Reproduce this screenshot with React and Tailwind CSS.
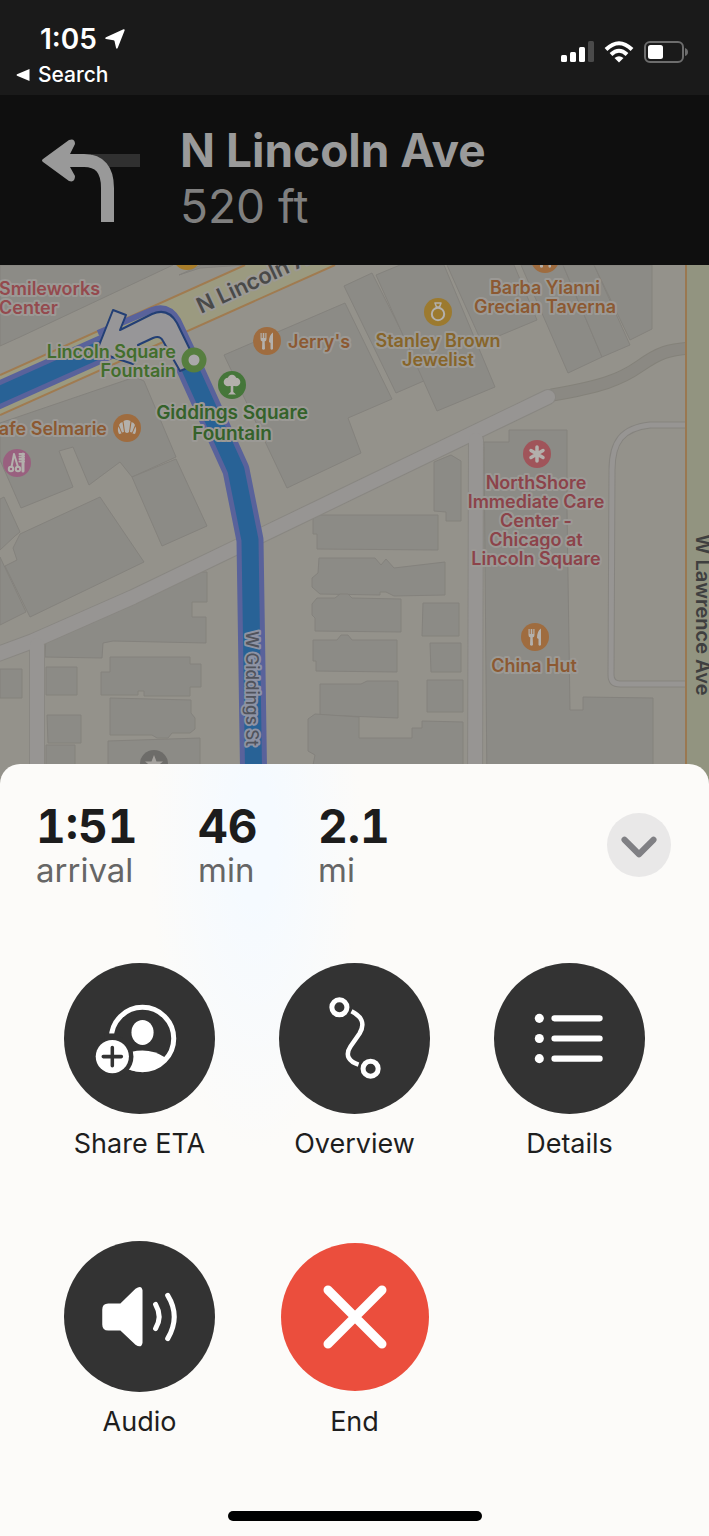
import { ChevronDown } from 'lucide-react';

const buildings = [
  'M0 265H173L20 337L0 346Z',
  'M179 275L201 265H245L200 268Z',
  'M224 355L345 303L392 399L348 418L361 453L287 488Z',
  'M344 286L372 273L426 380L396 393Z',
  'M376 275L400 265H444L495 387L437 411Z',
  'M447 265H514L537 320L482 343Z',
  'M521 265H563L602 357L568 373Z',
  'M563 265H594L630 345L602 357Z',
  'M594 265H652V329L630 340Z',
  'M0 423L135 377L144 381L176 457L132 477L120 462L89 485L73 447L59 451L73 487L21 508L0 460Z',
  'M132 477L176 459L207 526L162 546Z',
  'M0 499L4 497L20 532L15 536L0 550Z',
  'M20 534L100 497L144 562L30 617L5 566L17 560L13 548Z',
  'M0 557L26 612L0 625Z',
  'M46 638L192 572H207V602H192V617H206V643L113 641L103 643L102 658L45 657Z',
  'M46 667H77V695H46Z',
  'M47 715H81V743H48Z',
  'M46 745H75V790H46Z',
  'M0 669H22V698H0Z',
  'M101 672H110V657H190V664H201V687H190V696H144V691H138V695H101Z',
  'M110 698L191 700V713L195 718V729L190 733H172L168 738H157L152 735H110Z',
  'M108 741L200 738V790H108Z',
  'M313 515H438V550L317 549V534H313Z',
  'M319 558H375L381 565L386 559L394 568L445 562V595L394 596L386 592H380V595L320 594L312 587V578L318 573Z',
  'M317 598H335L340 594H348L352 598L401 599V632L315 631V618L312 615V604Z',
  'M313 640H337L341 635H348L352 640H397V672L316 671V661H313Z',
  'M320 684H361L367 681H398V718L320 715Z',
  'M308 719L315 714L359 717V738H412V728H422V721L463 722V790H308L315 755L308 751Z',
  'M434 462L451 455L461 461V521H446L446 512L434 511Z',
  'M423 603H459V636H422Z',
  'M430 643H461V672H431Z',
  'M427 680H463V712H427Z',
  'M484 442H509V430H567V511L570 710H583V697L653 698V790H487Z',
];

const pins = [
  { id: 'jerrys', x: 267, y: 341, fill: '#9f6c3f', kind: 'food' },
  { id: 'china', x: 535, y: 637, fill: '#9f6c3f', kind: 'food' },
  { id: 'barba', x: 545, y: 259, fill: '#9f6c3f', kind: 'food' },
  { id: 'lincoln-top', x: 187, y: 256, fill: '#a97e2b', kind: 'none' },
  { id: 'jeweler', x: 438, y: 312, fill: '#9c7a2f', kind: 'ring' },
  { id: 'giddings', x: 232, y: 385, fill: '#45763a', kind: 'tree' },
  { id: 'selmarie', x: 127, y: 428, fill: '#9f6c3f', kind: 'bakery' },
  { id: 'salon', x: 17, y: 463, fill: '#99607f', kind: 'salon' },
  { id: 'care', x: 537, y: 454, fill: '#a0545a', kind: 'care' },
  { id: 'star', x: 154, y: 764, fill: '#6d6c69', kind: 'star' },
];

const labels = [
  { lines: ['Smileworks', 'Center'], x: -1, y: 295, anchor: 'start', fill: '#944a4e' },
  { lines: ['Lincoln Square', 'Fountain'], x: 176, y: 358, anchor: 'end', fill: '#426e2c' },
  { lines: ['Giddings Square', 'Fountain'], x: 232, y: 419, anchor: 'middle', fill: '#34622a', size: 19, leading: 21 },
  { lines: ["Jerry's"], x: 288, y: 348, anchor: 'start', fill: '#8c5932' },
  { lines: ['Stanley Brown', 'Jewelist'], x: 438, y: 347, anchor: 'middle', fill: '#87652a' },
  { lines: ['Barba Yianni', 'Grecian Taverna'], x: 545, y: 294, anchor: 'middle', fill: '#8c5932' },
  { lines: ['Cafe Selmarie'], x: 107, y: 435, anchor: 'end', fill: '#8c5932' },
  { lines: ['NorthShore', 'Immediate Care', 'Center -', 'Chicago at', 'Lincoln Square'], x: 536, y: 489, anchor: 'middle', fill: '#8c434a' },
  { lines: ['China Hut'], x: 534, y: 672, anchor: 'middle', fill: '#8c5932' },
];

function PinGlyph({ kind }) {
  const line = { fill: 'none', stroke: '#b3b0ac', strokeWidth: 2, strokeLinecap: 'round', strokeLinejoin: 'round' };
  switch (kind) {
    case 'food':
      return (
        <g fill="#b3b0ac">
          <path d="M-6.500-8H-5.300V-3H-4.300V-8H-2.700V-3H-1.700V-8H-.5V-2Q-.5 0-2.300 .5L-2 8Q-3.500 9.500-5 8L-4.700 .5Q-6.500 0-6.500-2Z" />
          <path d="M6-8.500V8Q4.700 9.500 3.500 8V2L2 1Q2-6 6-8.500Z" />
        </g>
      );
    case 'ring':
      return (
        <g {...line}>
          <circle cy="2" r="6.200" />
          <path d="M-3-9H3L1.500-5H-1.500Z" strokeWidth="1.500" />
        </g>
      );
    case 'tree':
      return (
        <g fill="#b3b0ac">
          <circle cx="-4" cy="-3" r="4.300" />
          <circle cx="4" cy="-3" r="4.300" />
          <circle cy="-6" r="4.300" />
          <path d="M-4-3H4V1H-4ZM-1.300 0H1.300V7L4 9.500H-4L-1.300 7Z" />
        </g>
      );
    case 'bakery':
      return (
        <g fill="#b3b0ac">
          <path d="M-3.500-7Q0-9 3.500-7L2 4Q0 6-2 4Z" />
          <path d="M-4.500-6L-3 4L-5 4.500L-8-3Q-7-5.500-4.500-6ZM4.500-6L3 4L5 4.500L8-3Q7-5.500 4.500-6Z" />
          <path d="M-8.500-1.500L-5.500 5.500L-8 6Q-10 2-8.500-1.500ZM8.500-1.500L5.500 5.500L8 6Q10 2 8.500-1.500Z" />
        </g>
      );
    case 'salon':
      return (
        <g {...line}>
          <path d="M-3-9L-5.500 4M-3-9L1 4M2.500-9H7M2.500-6.500H7M2.500-4H7M2.500-1.500H7" />
          <path d="M6-9V8" strokeWidth="3" />
          <circle cx="-6" cy="6" r="2.200" />
          <circle cx="1" cy="6" r="2.200" />
        </g>
      );
    case 'care':
      return <path {...line} strokeWidth="3.500" d="M0-7V7M-6-3.500L6 3.500M-6 3.500L6-3.500" />;
    case 'star':
      return <path fill="#a5a29e" d="M0-9L2.500-2.500H9L4 1.500L6 8L0 4L-6 8L-4 1.500L-9-2.500H-2.500Z" />;
    default:
      return null;
  }
}

function RouteMap() {
  return (
    <svg
      viewBox="0 265 709 520"
      role="img"
      aria-label="Map of the route"
      className="block h-auto w-full bg-[#94928b] font-[Inter,'Liberation_Sans',sans-serif]"
    >
      <g fill="#8c8b86" stroke="#84827d" strokeWidth="1">
        {buildings.map((d) => (
          <path key={d} d={d} />
        ))}
      </g>

      {/* Side streets */}
      <g fill="none" strokeLinecap="round" strokeLinejoin="round">
        <path d="M552 395C600 387 620 380 640 366S668 350 690 348" stroke="#84827a" strokeWidth="13" />
        <path d="M552 395C600 387 620 380 640 366S668 350 690 348" stroke="#8b8983" strokeWidth="11" />
        <g stroke="#898782" strokeWidth="16">
          <path d="M-10 657L33 641L133 597L320 507L355 490L548 397" />
          <path d="M37 645V800M476 440L475 800" />
        </g>
        <g stroke="#979593" strokeWidth="14">
          <path d="M-10 657L33 641L133 597L320 507L355 490L548 397" />
          <path d="M37 645V800M476 440L475 800" />
        </g>
        <path d="M690 425H650C622 428 612 442 612 470L611 675Q611 684 620 684H690" stroke="#86847f" strokeWidth="7" />
        <path d="M690 425H650C622 428 612 442 612 470L611 675Q611 684 620 684H690" stroke="#979593" strokeWidth="5" />
      </g>

      {/* Main roads */}
      <path d="M0 375L245 265H335L0 415Z" fill="#9b9a80" />
      <path d="M0 375L245 265M335 265L0 415" stroke="#a07b50" strokeWidth="2" />
      <path d="M687 265H709V800H687Z" fill="#929480" />
      <path d="M686 265V800" stroke="#9a7851" strokeWidth="2" />

      {/* Route */}
      <g fill="none" strokeLinejoin="round">
        <path d="M98 333L152 310Q168 304 178 320L198 362" stroke="#59629b" strokeWidth="6" />
        <g stroke="#59629b" strokeWidth="27">
          <path d="M-10 399L113 344" />
          <path d="M188 364L236 470L250 540L254 800" />
        </g>
        <g stroke="#286296" strokeWidth="17">
          <path d="M-10 399L113 344" />
          <path d="M188 364L236 470L250 540L254 800" />
        </g>
      </g>
      <path
        d="M113 310L126 315L120 330L152 314Q168 307 177 323L197 364L180 371L163 341Q160 335 153 338L138 345L141 352L133 364L112 357L98 348Z"
        fill="#979698"
        stroke="#233f75"
        strokeWidth="2"
        strokeLinejoin="round"
      />
      <circle cx="194" cy="360" r="9" fill="#aaa8aa" stroke="#567e3f" strokeWidth="7" />

      {/* Places */}
      {pins.map((pin) => (
        <g key={pin.id} transform={`translate(${pin.x} ${pin.y})`}>
          <circle r="14" fill={pin.fill} />
          <PinGlyph kind={pin.kind} />
        </g>
      ))}
      <g stroke="#9b9995" strokeWidth="4" strokeLinejoin="round" paintOrder="stroke" fontWeight="600">
        {labels.map(({ lines, x, y, anchor, fill, size = 18, leading = 19 }) => (
          <text key={lines[0]} textAnchor={anchor} fill={fill} fontSize={size}>
            {lines.map((line, i) => (
              <tspan key={line} x={x} y={y + i * leading}>
                {line}
              </tspan>
            ))}
          </text>
        ))}
        <text transform="translate(201 314) rotate(-25)" fontSize="22" fill="#4a4a49">N Lincoln Ave</text>
        <text transform="translate(696 534) rotate(90)" fontSize="20" fill="#3f3f3f" stroke="#929480">W Lawrence Ave</text>
        <text transform="translate(246 631) rotate(90)" fontSize="17" fontWeight="500" fill="#50535c" stroke="#8e93a4">W Giddings St</text>
      </g>
    </svg>
  );
}

function StatusBar() {
  return (
    <div className="flex h-[95px] justify-between bg-[#1a1a1a] pr-[21px] pl-4 text-white">
      <div className="pt-[21px]">
        <div className="flex items-center gap-2 pl-6 text-[28px] leading-9 font-semibold">
          <span>1:05</span>
          <svg viewBox="0 0 20 20" className="size-5" fill="currentColor" aria-hidden="true">
            <path d="M18.500 0.300Q20 0 19.600 1.500L12.800 18.800Q11.800 20.500 11 18.800L9.500 12Q9.300 11.300 8.500 11.200L1 10Q-0.500 9.300 1 8.300Z" />
          </svg>
        </div>
        <button type="button" className="flex items-center gap-2 text-[21px] leading-9 font-medium">
          <svg viewBox="0 0 14 14" className="size-[14px]" fill="currentColor" aria-hidden="true">
            <path d="M13.500 1V13L1 7.700Q0 7 1 6.300Z" />
          </svg>
          Search
        </button>
      </div>
      <div className="flex items-center gap-[10px] pt-2">
        <svg viewBox="0 0 33 21" className="h-[21px] w-[33px]" fill="currentColor" aria-label="Signal" role="img">
          <rect x="0" y="14" width="6" height="7" rx="1.500" />
          <rect x="9" y="11" width="6" height="10" rx="1.500" />
          <rect x="18" y="6" width="6" height="15" rx="1.500" />
          <rect x="27" y="0" width="6" height="21" rx="1.500" fill="#4a4a4a" />
        </svg>
        <svg viewBox="0 0 30 22" className="h-[22px] w-[30px]" fill="none" stroke="currentColor" aria-label="Wi-Fi" role="img">
          <path d="M2 8.500Q15-4 28 8.500M7 13.500Q15 6 23 13.500" strokeWidth="4" />
          <path d="M15 21.500L10.500 17Q15 13.500 19.500 17Z" fill="currentColor" stroke="none" />
        </svg>
        <svg viewBox="0 0 44 22" className="h-[22px] w-11" aria-label="Battery" role="img">
          <rect x="1" y="1" width="38" height="20" rx="5" fill="none" stroke="#6d6d6d" strokeWidth="2" />
          <rect x="4" y="4" width="15" height="14" rx="2.500" fill="#fff" />
          <path d="M41 7Q44 8 44 11T41 15Z" fill="#6d6d6d" />
        </svg>
      </div>
    </div>
  );
}

function TurnBanner() {
  return (
    <header className="flex h-[170px] items-center gap-10 bg-[#0f0f0f] pl-[42px]">
      <svg viewBox="0 0 98 84" className="h-[84px] w-[98px]" aria-label="Turn left" role="img">
        <path d="M50 16H98V29H50Z" fill="#303030" />
        <path d="M20 22.500H42Q65.500 22.500 65.500 50V84" fill="none" stroke="#999" strokeWidth="13" />
        <path d="M1 21L27 2Q33 0 33 6L28 16V29L33 38Q33 45 27 43L1 24Q-1 22.500 1 21Z" fill="#999" />
      </svg>
      <div className="pb-1">
        <h1 className="text-[46px] leading-[56px] font-bold text-[#9a9a9a]">N Lincoln Ave</h1>
        <p className="text-[46px] leading-[56px] text-[#7f7f7f]">520 ft</p>
      </div>
    </header>
  );
}

const stats = [
  { value: '1:51', unit: 'arrival', width: 'w-[162px]' },
  { value: '46', unit: 'min', width: 'w-[120px]' },
  { value: '2.1', unit: 'mi', width: 'w-[120px]' },
];

function ShareIcon() {
  return (
    <svg viewBox="0 0 150 150" className="size-full" aria-hidden="true">
      <circle cx="78" cy="75" r="31" fill="none" stroke="#fff" strokeWidth="5" />
      <ellipse cx="78" cy="69" rx="11" ry="12.500" fill="#fff" />
      <path d="M60 92Q66 87 78 87T101 94Q92 108 78 108T56 100Z" fill="#fff" />
      <circle cx="48" cy="93" r="21" fill="#333" />
      <path d="M40 70H56V78H40Z" fill="#333" />
      <circle cx="48" cy="93" r="16.500" fill="#fff" />
      <path d="M48 84V102M39 93H57" stroke="#333" strokeWidth="3.500" strokeLinecap="round" />
    </svg>
  );
}

function OverviewIcon() {
  return (
    <svg viewBox="0 0 150 150" className="size-full" fill="none" stroke="#fff" aria-hidden="true">
      <circle cx="60" cy="44" r="7.500" strokeWidth="5" />
      <circle cx="91" cy="105" r="7.500" strokeWidth="5" />
      <path d="M72 48C82 53 86 60 80 70L71 83C65 92 70 98 79 101" strokeWidth="4.500" />
    </svg>
  );
}

function DetailsIcon() {
  return (
    <svg viewBox="0 0 150 150" className="size-full" fill="#fff" aria-hidden="true">
      <circle cx="45" cy="55" r="4.500" />
      <circle cx="45" cy="75" r="4.500" />
      <circle cx="45" cy="95" r="4.500" />
      <path d="M60 55H105M60 75H105M60 95H105" stroke="#fff" strokeWidth="6" strokeLinecap="round" />
    </svg>
  );
}

function AudioIcon() {
  return (
    <svg viewBox="0 0 150 150" className="size-full" fill="#fff" aria-hidden="true">
      <path d="M44 62H56L71 47.500Q77 43 78 49V101Q77 107 71 103L56 89H44Q38 89 38 83V68Q38 62 44 62Z" />
      <path d="M91 63Q98 75 91 87M103 54Q116 75 103 97" fill="none" stroke="#fff" strokeWidth="5" strokeLinecap="round" />
    </svg>
  );
}

function EndIcon() {
  return (
    <svg viewBox="0 0 148 148" className="size-full" aria-hidden="true">
      <path d="M47 47L101 101M101 47L47 101" stroke="#fff" strokeWidth="9" strokeLinecap="round" />
    </svg>
  );
}

const actions = [
  { label: 'Share ETA', icon: ShareIcon, circle: 'size-[151px] bg-[#333333]' },
  { label: 'Overview', icon: OverviewIcon, circle: 'size-[151px] bg-[#333333]' },
  { label: 'Details', icon: DetailsIcon, circle: 'size-[151px] bg-[#333333]' },
  { label: 'Audio', icon: AudioIcon, circle: 'size-[151px] bg-[#333333]' },
  { label: 'End', icon: EndIcon, circle: 'size-[148px] bg-[#eb4e3d]' },
];

export default function App() {
  return (
    <div className="flex min-h-screen flex-col bg-[#0f0f0f] font-[Inter,'Liberation_Sans',sans-serif]">
      <StatusBar />
      <TurnBanner />
      <RouteMap />

      <section className="relative -mt-[21px] flex flex-1 flex-col rounded-t-[20px] bg-[#fcfbf9] bg-[radial-gradient(ellipse_15%_40%_at_36%_10%,#f5faff_20%,transparent)] pt-9">
        <div className="flex items-start justify-between pr-[38px] pl-9">
          <dl className="flex">
            {stats.map((stat) => (
              <div key={stat.unit} className={`flex flex-col-reverse ${stat.width}`}>
                <dt className="text-[33px] leading-9 text-[#666]">{stat.unit}</dt>
                <dd className="text-[46px] leading-[52px] font-bold text-[#1c1c1c] tabular-nums">{stat.value}</dd>
              </div>
            ))}
          </dl>
          <button
            type="button"
            aria-label="Collapse"
            className="mt-[13px] flex size-16 items-center justify-center rounded-full bg-[#e9e8e8] pt-1 text-[#808084]"
          >
            <ChevronDown className="size-[58px]" strokeWidth={2.5} />
          </button>
        </div>

        <div className="mt-[75px] grid grid-cols-3 gap-y-[81px] px-8">
          {actions.map(({ label, icon: Icon, circle }) => (
            <button key={label} type="button" className="flex flex-col items-center gap-[14px]">
              <span className="flex h-[151px] items-center">
                <span className={`block rounded-full ${circle}`}>
                  <Icon />
                </span>
              </span>
              <span className="text-[27px] leading-8 text-[#1e1e1e]">{label}</span>
            </button>
          ))}
        </div>

        <div className="mx-auto mt-auto mb-[15px] h-[10px] w-[254px] rounded-full bg-black" />
      </section>
    </div>
  );
}
